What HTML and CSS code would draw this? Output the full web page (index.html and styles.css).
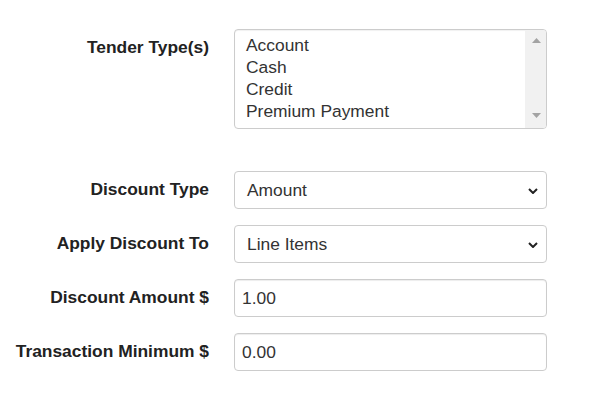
FILE: index.html
```html
<!DOCTYPE html>
<html>
<head>
<meta charset="utf-8">
<link rel="stylesheet" href="styles.css">
</head>
<body>
<form class="form">
  <div class="group group-tender">
    <label class="label">Tender Type(s)</label>
    <div class="listbox">
      <div class="list">
        <div class="opt">Account</div>
        <div class="opt">Cash</div>
        <div class="opt">Credit</div>
        <div class="opt">Premium Payment</div>
      </div>
      <div class="scrollbar">
        <svg class="arrow" width="9" height="5" viewBox="0 0 9 5"><path d="M0 5 L4.5 0 L9 5 Z" fill="#a3a3a3"/></svg>
        <svg class="arrow" width="9" height="5" viewBox="0 0 9 5"><path d="M0 0 L4.5 5 L9 0 Z" fill="#a3a3a3"/></svg>
      </div>
    </div>
  </div>
  <div class="group">
    <label class="label">Discount Type</label>
    <div class="select">
      <span>Amount</span>
      <svg class="chev" width="10" height="6" viewBox="0 0 10 6"><path d="M1 1 L5 5 L9 1" fill="none" stroke="#222" stroke-width="2"/></svg>
    </div>
  </div>
  <div class="group">
    <label class="label">Apply Discount To</label>
    <div class="select">
      <span>Line Items</span>
      <svg class="chev" width="10" height="6" viewBox="0 0 10 6"><path d="M1 1 L5 5 L9 1" fill="none" stroke="#222" stroke-width="2"/></svg>
    </div>
  </div>
  <div class="group">
    <label class="label">Discount Amount $</label>
    <input class="input" type="text" value="1.00">
  </div>
  <div class="group">
    <label class="label">Transaction Minimum $</label>
    <input class="input" type="text" value="0.00">
  </div>
</form>
</body>
</html>
```
FILE: styles.css
```css
html, body {
  margin: 0;
  padding: 0;
  background: #fff;
}
body {
  font-family: "Liberation Sans", Arial, sans-serif;
  font-size: 17.4px;
  color: #333;
}
.form {
  display: flex;
  flex-direction: column;
  gap: 16px;
  padding-top: 29px;
}
.group {
  display: grid;
  grid-template-columns: 209px 313px;
  column-gap: 25px;
  align-items: start;
}
.group-tender {
  margin-bottom: 26px;
}
.label {
  text-align: right;
  font-weight: bold;
  line-height: 20px;
  padding-top: 8px;
  color: #222;
  white-space: nowrap;
}
.listbox {
  box-sizing: border-box;
  height: 100px;
  border: 1px solid #ccc;
  border-radius: 4px;
  display: flex;
  overflow: hidden;
  box-shadow: inset 0 1px 1px rgba(0,0,0,0.06);
}
.list {
  flex: 1;
  padding: 4px 0 0 11px;
}
.opt {
  line-height: 22px;
  height: 22px;
  color: #333;
}
.scrollbar {
  width: 21px;
  background: #f1f1f1;
  display: flex;
  flex-direction: column;
  justify-content: space-between;
  align-items: center;
  padding: 8px 0 10px;
  box-sizing: border-box;
}
.arrow {
  display: block;
  margin-left: 1px;
}
.select, .input {
  box-sizing: border-box;
  height: 38px;
  border: 1px solid #ccc;
  border-radius: 4px;
  background: #fff;
  font-family: inherit;
  font-size: 17.4px;
  color: #333;
}
.select {
  display: flex;
  align-items: center;
  justify-content: space-between;
  padding: 0 8px 0 12px;
  line-height: 20px;
}
.chev {
  display: block;
  margin-top: 1px;
}
.input {
  width: 313px;
  padding: 0 7px;
  outline: none;
  box-shadow: inset 0 1px 1px rgba(0,0,0,0.075);
}
```
